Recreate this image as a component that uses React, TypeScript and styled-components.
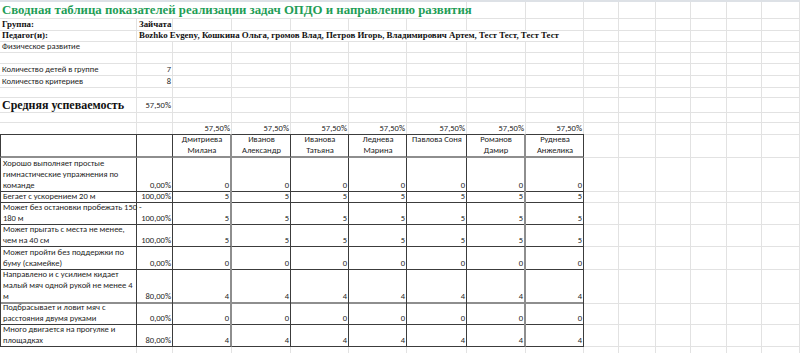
import React from 'react';
import styled, { createGlobalStyle, css } from 'styled-components';

const Global = createGlobalStyle`
  html, body { margin: 0; padding: 0; background: #ffffff; }
  body { width: 800px; height: 353px; overflow: hidden; }
  #root { width: 800px; }
`;

const COLS = [137, 36, 59, 59, 58, 58, 60, 59, 58, 35, 37, 35, 36, 35, 38];
const GRID = COLS.map((w) => `${w}px`).join(' ');
const LIGHT = '#e2e2e2';
const DARK = '#3c3c3c';
const THICK = '#8e8e8e';

const Sheet = styled.div`
  display: flex;
  flex-direction: column;
  width: 800px;
  background: #fff;
`;

const HeaderStrip = styled.div`
  height: 2px;
  background: #dde1e6;
`;

const Row = styled.div<{ $h: number }>`
  display: grid;
  grid-template-columns: ${GRID};
  height: ${(p) => p.$h}px;
`;

type Font = 'small' | 'title' | 'label' | 'big';

const fonts = {
  small: css`
    font-family: 'Carlito', 'Lato', 'Open Sans', sans-serif;
    font-size: 8.5px;
    line-height: 11px;
    color: #1c1c1c;
  `,
  title: css`
    font-family: 'Liberation Serif', 'Times New Roman', serif;
    font-weight: 700;
    font-size: 12.8px;
    line-height: 16px;
    color: #1f9e57;
  `,
  label: css`
    font-family: 'Liberation Serif', 'Times New Roman', serif;
    font-weight: 700;
    font-size: 8.9px;
    line-height: 11px;
    color: #111;
  `,
  big: css`
    font-family: 'Liberation Serif', 'Times New Roman', serif;
    font-weight: 700;
    font-size: 12px;
    line-height: 14px;
    color: #111;
  `,
};

interface CellProps {
  $span?: number;
  $align?: 'left' | 'right' | 'center';
  $valign?: 'top' | 'bottom' | 'center';
  $font?: Font;
  $dark?: boolean;
  $darkBottom?: boolean;
  $left?: boolean;
  $thickBottom?: boolean;
  $thickRight?: boolean;
}

const Cell = styled.div<CellProps>`
  box-sizing: border-box;
  grid-column: span ${(p) => p.$span ?? 1};
  display: flex;
  flex-direction: column;
  justify-content: ${(p) =>
    p.$valign === 'top' ? 'flex-start' : p.$valign === 'center' ? 'center' : 'flex-end'};
  align-items: ${(p) =>
    p.$align === 'right' ? 'flex-end' : p.$align === 'center' ? 'center' : 'flex-start'};
  text-align: ${(p) => p.$align ?? 'left'};
  white-space: pre;
  overflow: visible;
  padding: 0 1px 0 2px;
  border-right: ${(p) =>
    p.$thickRight ? `2px solid ${THICK}` : `1px solid ${p.$dark ? DARK : LIGHT}`};
  border-bottom: ${(p) =>
    p.$thickBottom
      ? `2px solid ${THICK}`
      : `1px solid ${p.$dark || p.$darkBottom ? DARK : LIGHT}`};
  border-left: ${(p) => (p.$left ? `1px solid ${DARK}` : '0')};
  ${(p) => fonts[p.$font ?? 'small']}
`;

const students = [
  'Дмитриева\nМилана',
  'Иванов\nАлександр',
  'Иванова\nТатьяна',
  'Леднева\nМарина',
  'Павлова Соня',
  'Романов\nДамир',
  'Руднева\nАнжелика',
];

const criteria = [
  { text: 'Хорошо выполняет простые\nгимнастические упражнения по\nкоманде', pct: '0,00%', v: 0, h: 33 },
  { text: 'Бегает с ускорением 20 м', pct: '100,00%', v: 5, h: 11 },
  { text: 'Может без остановки пробежать 150 -\n180 м', pct: '100,00%', v: 5, h: 22 },
  { text: 'Может прыгать с места не менее,\nчем на 40 см', pct: '100,00%', v: 5, h: 23 },
  { text: 'Может пройти без поддержки по\nбуму (скамейке)', pct: '0,00%', v: 0, h: 22 },
  { text: 'Направлено и с усилием кидает\nмалый мяч одной рукой не менее 4\nм', pct: '80,00%', v: 4, h: 33, thick: true },
  { text: 'Подбрасывает и ловит мяч с\nрасстояния двумя руками', pct: '0,00%', v: 0, h: 22 },
  { text: 'Много двигается на прогулке и\nплощадках', pct: '80,00%', v: 4, h: 23 },
];

const Empty: React.FC<{ count: number }> = ({ count }) => (
  <>
    {Array.from({ length: count }).map((_, i) => (
      <Cell key={i} />
    ))}
  </>
);

// thick vertical line after column C (index 0) and H (index 5)
const thickAfter = (i: number) => i === 0 || i === 5;

export default function App() {
  return (
    <>
      <Global />
      <Sheet>
        <HeaderStrip />
        <Row $h={17}>
          <Cell $span={7} $font="title" $valign="center">
            Сводная таблица показателей реализации задач ОПДО и направлению развития
          </Cell>
          <Empty count={8} />
        </Row>
        <Row $h={11}>
          <Cell $font="label">Группа:</Cell>
          <Cell $font="label">Зайчата</Cell>
          <Empty count={13} />
        </Row>
        <Row $h={11}>
          <Cell $font="label">Педагог(и):</Cell>
          <Cell $span={8} $font="label">
            Bozhko Evgeny, Кошкина Ольга, громов Влад, Петров Игорь, Владимирович Артем, Тест Тест, Тест Тест
          </Cell>
          <Empty count={6} />
        </Row>
        <Row $h={11}>
          <Cell>Физическое развитие</Cell>
          <Empty count={14} />
        </Row>
        <Row $h={12}>
          <Empty count={15} />
        </Row>
        <Row $h={12}>
          <Cell>Количество детей в группе</Cell>
          <Cell $align="right">7</Cell>
          <Empty count={13} />
        </Row>
        <Row $h={11}>
          <Cell>Количество критериев</Cell>
          <Cell $align="right">8</Cell>
          <Empty count={13} />
        </Row>
        <Row $h={11}>
          <Empty count={15} />
        </Row>
        <Row $h={14}>
          <Cell $font="big">Средняя успеваемость</Cell>
          <Cell $align="right" $valign="center">57,50%</Cell>
          <Empty count={13} />
        </Row>
        <Row $h={11}>
          <Empty count={15} />
        </Row>
        <Row $h={11}>
          <Cell $darkBottom />
          <Cell $darkBottom />
          {students.map((s) => (
            <Cell key={s} $align="right" $darkBottom>
              57,50%
            </Cell>
          ))}
          <Empty count={6} />
        </Row>
        <Row $h={24}>
          <Cell $dark $left $thickBottom />
          <Cell $dark $thickBottom />
          {students.map((s, i) => (
            <Cell
              key={s}
              $dark
              $thickBottom
              $thickRight={thickAfter(i)}
              $align="center"
              $valign="top"
            >
              {s}
            </Cell>
          ))}
          <Empty count={6} />
        </Row>
        {criteria.map((c) => (
          <Row key={c.text} $h={c.h}>
            <Cell $dark $left $thickBottom={c.thick}>
              {c.text}
            </Cell>
            <Cell $dark $thickBottom={c.thick} $align="right">
              {c.pct}
            </Cell>
            {students.map((s, i) => (
              <Cell
                key={s}
                $dark
                $thickBottom={c.thick}
                $thickRight={thickAfter(i)}
                $align="right"
              >
                {String(c.v)}
              </Cell>
            ))}
            <Empty count={6} />
          </Row>
        ))}
        <Row $h={11}>
          <Empty count={15} />
        </Row>
      </Sheet>
    </>
  );
}
